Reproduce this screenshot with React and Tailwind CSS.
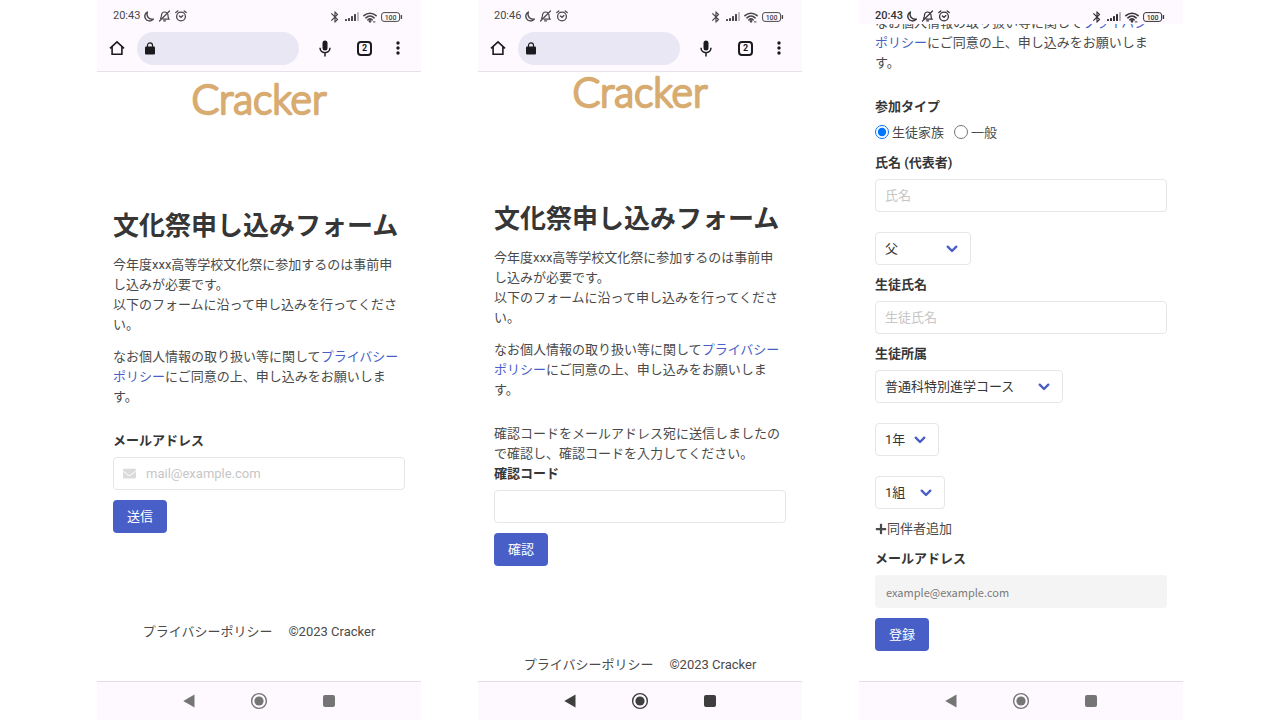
import React, { useState } from 'react';
import { FaEnvelope, FaPlus } from 'react-icons/fa';
import { MdBluetooth } from 'react-icons/md';

const inputClass =
  'block h-[33px] w-full rounded border border-[#e6e6e6] bg-white text-[13px] text-[#363636] placeholder-[#c6c6c6] outline-none focus:border-[#485fc7]';

const StatusBar = ({ time, bold }) => (
  <div
    className={`flex h-6 shrink-0 items-end justify-between bg-[#fdf9ff] pl-4 pr-[18px] text-[11px] leading-4 ${
      bold ? 'font-medium text-[#333333]' : 'text-[#484848]'
    }`}
  >
    <div className="flex items-center gap-1">
      <span>{time}</span>
      {/* Do not disturb */}
      <svg width="10" height="11" viewBox="0 0 10 11" fill="none" stroke="currentColor" strokeWidth="1.4" strokeLinejoin="round">
        <path d="M3.400 1C.9 2.300.2 5.200 1.400 7.500c1.500 2.800 5.800 3.400 8 .6C7.100 8.500 5 7.900 3.900 6.100 2.900 4.500 2.800 2.600 3.400 1z" />
      </svg>
      {/* Silent */}
      <svg width="13" height="12" viewBox="0 0 13 12" fill="none" stroke="currentColor" strokeWidth="1.2" strokeLinecap="round">
        <path d="M1.500 11 11.500 1M2.500 8.400c1-1.200.9-2 1-3.400C3.700 3.200 4.900 2 6.600 2c.8 0 1.500.2 2 .7M9.900 4.400c.2 2-.1 3 1.100 4.800H5.200M5.600 10.800h2" />
      </svg>
      {/* Alarm */}
      <svg width="12" height="12" viewBox="0 0 12 12" fill="none" stroke="currentColor" strokeWidth="1.300" strokeLinecap="round">
        <circle cx="6" cy="6.500" r="4.400" />
        <path d="M.8 2.600 2.800 1M11.200 2.600 9.200 1M4.400 6l1.600 1.300L7.900 5.600" />
      </svg>
    </div>
    <div className="flex items-center gap-1">
      <MdBluetooth size={14} className="-mr-px" />
      {/* Mobile signal */}
      <svg width="14" height="10" viewBox="0 0 14 10" fill="currentColor">
        <rect x="0" y="7" width="2" height="2" rx=".5" />
        <rect x="3" y="6" width="2" height="3" rx=".5" />
        <rect x="6" y="4" width="2" height="5" rx=".5" />
        <rect x="9" y="2" width="2" height="7" rx=".5" />
        <rect x="12" y="0" width="2" height="9" rx=".5" opacity=".35" />
      </svg>
      {/* Wi-Fi */}
      <svg width="14" height="11" viewBox="0 0 14 11" fill="none" stroke="currentColor" strokeWidth="1.600" strokeLinecap="round">
        <path d="M.9 3.600C4.400.4 9.600.4 13.100 3.600M2.900 5.800c2.400-2.200 5.800-2.200 8.200 0M4.900 7.900c1.200-1.100 3-1.100 4.200 0" />
        <circle cx="7" cy="9.300" r=".6" fill="currentColor" />
        <path d="M10.400 9.900h1.600" strokeWidth="1" />
      </svg>
      {/* Battery */}
      <svg width="22" height="10" viewBox="0 0 22 10" fill="none" stroke="currentColor">
        <rect x=".6" y=".6" width="18" height="8.800" rx="2.400" strokeWidth="1" />
        <path d="M20.400 3.600v2.800" strokeWidth="1.400" strokeLinecap="round" />
        <text x="9.600" y="7.500" textAnchor="middle" fontSize="7" fontWeight="500" fill="currentColor" stroke="none">
          100
        </text>
      </svg>
    </div>
  </div>
);

const BrowserBar = () => (
  <div className="flex h-12 shrink-0 items-center border-b border-[#e6e2ea] bg-[#fdf9ff] pr-[3px] pt-px text-[#1b1b1f]">
    <button aria-label="Home" className="flex w-10 justify-center">
      <svg width="16" height="16" viewBox="0 0 16 16" fill="none" stroke="currentColor" strokeWidth="1.600">
        <path d="M1 8.300 8 1.800l7 6.500M3.100 6.600v7.700h9.800V6.600" />
      </svg>
    </button>
    <button aria-label="Address" className="flex h-[33px] flex-1 items-center rounded-full bg-[#e8e7f3] pl-2">
      <svg width="10" height="13" viewBox="0 0 10 13">
        <rect y="4.500" width="10" height="8" rx="1" fill="currentColor" />
        <path d="M2.500 5V3.200a2.500 2.300 0 0 1 5 0V5" fill="none" stroke="currentColor" strokeWidth="1.200" />
      </svg>
    </button>
    <button aria-label="Voice search" className="flex w-[52px] justify-center">
      <svg width="12" height="17" viewBox="0 0 12 17" fill="none" stroke="currentColor">
        <rect x="3.500" y=".5" width="5" height="10" rx="2.500" fill="currentColor" stroke="none" />
        <path d="M1 7.800c0 6.500 10 6.500 10 0M6 12.800V16.500" strokeWidth="1.500" />
      </svg>
    </button>
    <button aria-label="Tabs" className="flex w-[27px] justify-center">
      <span className="flex h-[15px] w-[15px] items-center justify-center rounded border-2 border-current text-[9px] font-bold leading-none">2</span>
    </button>
    <button aria-label="Menu" className="flex w-10 justify-center">
      <svg width="4" height="14" viewBox="0 0 4 14" fill="currentColor">
        <circle cx="2" cy="2" r="1.700" />
        <circle cx="2" cy="7" r="1.700" />
        <circle cx="2" cy="12" r="1.700" />
      </svg>
    </button>
  </div>
);

const NavBar = ({ dark }) => (
  <div
    className={`flex h-[39px] shrink-0 items-center justify-center border-t border-[#e2dee4] bg-[#fdf9ff] pb-px ${
      dark ? 'text-[#3e3e3e]' : 'text-[#757575]'
    }`}
  >
    <button aria-label="Back" className="flex w-[70px] justify-center">
      <svg width="12" height="14" viewBox="0 0 12 14" fill="currentColor">
        <path d="M11.500.5v13L.3 7z" />
      </svg>
    </button>
    <button aria-label="Home" className="flex w-[70px] justify-center">
      <svg width="18" height="18" viewBox="0 0 18 18" fill="none" stroke="currentColor">
        <circle cx="9" cy="9" r="7.400" strokeWidth="1.400" />
        <circle cx="9" cy="9" r="4.600" fill="currentColor" stroke="none" />
      </svg>
    </button>
    <button aria-label="Recents" className="flex w-[70px] justify-center">
      <span className="h-3 w-3 rounded-xs bg-current" />
    </button>
  </div>
);

const Phone = ({ time, scrolled, dark, children }) => (
  <section className="flex min-h-screen min-w-0 flex-col bg-white">
    <StatusBar time={time} bold={scrolled} />
    {!scrolled && <BrowserBar />}
    <main className="flex-1 overflow-hidden px-4">{children}</main>
    <NavBar dark={dark} />
  </section>
);

const Logo = () => (
  <svg className="mx-auto block" width="144" height="50" viewBox="0 0 144 50" role="img" aria-label="Cracker">
    <text
      x="72"
      y="40"
      textAnchor="middle"
      fontSize="41"
      fill="#d8ac70"
      stroke="#d8ac70"
      strokeWidth="2.400"
      strokeLinejoin="round"
      className="font-light [font-family:Lato,sans-serif]"
    >
      Cracker
    </text>
  </svg>
);

const Label = ({ children, ...props }) => (
  <label className="mb-[6px] block font-bold text-[#363636]" {...props}>
    {children}
  </label>
);

const PrivacyNote = () => (
  <p>
    なお個人情報の取り扱い等に関して
    <a href="#privacy" className="text-[#485fc7]">プライバシーポリシー</a>
    にご同意の上、申し込みをお願いします。
  </p>
);

const Intro = () => (
  <>
    <Logo />
    <h1 className="mb-[14px] mt-[87px] whitespace-nowrap text-[26px] font-bold leading-[30px] text-[#363636]">
      文化祭申し込みフォーム
    </h1>
    <p className="mb-3">
      今年度xxx高等学校文化祭に参加するのは事前申し込みが必要です。
      <br />
      以下のフォームに沿って申し込みを行ってください。
    </p>
    <PrivacyNote />
  </>
);

const SubmitButton = ({ children }) => (
  <button type="submit" className="mt-[10px] block h-[33px] rounded bg-[#485fc7] px-[14px] text-white">
    {children}
  </button>
);

const Select = ({ label, options, width }) => (
  <div className={`relative ${width}`}>
    <select
      aria-label={label}
      className="block h-[33px] w-full appearance-none rounded border border-[#e6e6e6] bg-white pl-[9px] text-[13px] text-[#363636] outline-none"
    >
      {options.map((option) => (
        <option key={option}>{option}</option>
      ))}
    </select>
    <svg
      className="pointer-events-none absolute right-[13px] top-[13px]"
      width="12"
      height="8"
      viewBox="0 0 12 8"
      fill="none"
      stroke="#485fc7"
      strokeWidth="2.400"
      strokeLinecap="round"
      strokeLinejoin="round"
    >
      <path d="M1.700 1.700 6 6l4.300-4.300" />
    </svg>
  </div>
);

const Footer = () => (
  <footer className="mt-[89px] flex justify-center gap-4 whitespace-nowrap">
    <a href="#privacy">プライバシーポリシー</a>
    <span>©2023 Cracker</span>
  </footer>
);

const App = () => {
  const [type, setType] = useState('family');
  const stop = (e) => e.preventDefault();

  return (
    <div className="grid min-h-screen grid-cols-3 gap-[57px] bg-white px-[97px] text-[13px] leading-5 text-[#4a4a4a] [font-family:Roboto,'Noto_Sans_CJK_JP',sans-serif]">
      {/* Step 1: mail address */}
      <Phone time="20:43">
        <div className="pt-[2px]">
          <Intro />
          <form onSubmit={stop} className="mt-6">
            <Label htmlFor="mail">メールアドレス</Label>
            <div className="relative">
              <FaEnvelope size={13} className="pointer-events-none absolute left-[10px] top-[10px] text-[#dbdbdb]" />
              <input id="mail" type="email" placeholder="mail@example.com" className={`${inputClass} pl-8 pr-2`} />
            </div>
            <SubmitButton>送信</SubmitButton>
          </form>
          <Footer />
        </div>
      </Phone>

      {/* Step 2: confirmation code */}
      <Phone time="20:46" dark>
        <div className="-mt-[5px]">
          <Intro />
          <form onSubmit={stop} className="mt-6">
            <p>確認コードをメールアドレス宛に送信しましたので確認し、確認コードを入力してください。</p>
            <Label htmlFor="code">確認コード</Label>
            <input id="code" type="text" className={`${inputClass} px-[9px]`} />
            <SubmitButton>確認</SubmitButton>
          </form>
          <Footer />
        </div>
      </Phone>

      {/* Step 3: registration details */}
      <Phone time="20:43" scrolled>
        <div className="-mt-[11px]">
          <PrivacyNote />
          <form onSubmit={stop} className="mt-6">
            <fieldset>
              <legend className="mb-[6px] font-bold text-[#363636]">参加タイプ</legend>
              <div className="flex gap-[10px]">
                <label className="flex items-center gap-[3px]">
                  <input
                    type="radio"
                    name="type"
                    className="mb-[3px] h-[14px] w-[14px] accent-[#0075ff]"
                    checked={type === 'family'}
                    onChange={() => setType('family')}
                  />
                  生徒家族
                </label>
                <label className="flex items-center gap-[3px]">
                  <input
                    type="radio"
                    name="type"
                    className="mb-[3px] h-[14px] w-[14px] accent-[#0075ff]"
                    checked={type === 'general'}
                    onChange={() => setType('general')}
                  />
                  一般
                </label>
              </div>
            </fieldset>
            <div className="mt-[10px]">
              <Label htmlFor="name">氏名 (代表者)</Label>
              <input id="name" type="text" placeholder="氏名" className={`${inputClass} px-[9px]`} />
            </div>
            <div className="mt-5">
              <Select label="続柄" options={['父', '母', '兄弟姉妹', 'その他']} width="w-24" />
            </div>
            <div className="mt-[10px]">
              <Label htmlFor="student">生徒氏名</Label>
              <input id="student" type="text" placeholder="生徒氏名" className={`${inputClass} px-[9px]`} />
            </div>
            <div className="mt-[10px]">
              <p className="mb-[6px] font-bold text-[#363636]">生徒所属</p>
              <div className="flex flex-col gap-5">
                <Select label="コース" options={['普通科特別進学コース']} width="w-[188px]" />
                <Select label="学年" options={['1年', '2年', '3年']} width="w-16" />
                <Select label="組" options={['1組', '2組', '3組']} width="w-[70px]" />
              </div>
            </div>
            <button type="button" className="mt-[10px] flex items-center">
              <FaPlus size={12} />
              同伴者追加
            </button>
            <div className="mt-[10px]">
              <Label htmlFor="registered">メールアドレス</Label>
              <input
                id="registered"
                type="email"
                disabled
                value="example@example.com"
                className="block h-[33px] w-full rounded bg-[#f4f4f4] px-[11px] text-[11px] text-[#7a7a7a] [font-family:'Noto_Sans_CJK_JP',sans-serif]"
              />
            </div>
            <SubmitButton>登録</SubmitButton>
          </form>
        </div>
      </Phone>
    </div>
  );
};

export default App;
